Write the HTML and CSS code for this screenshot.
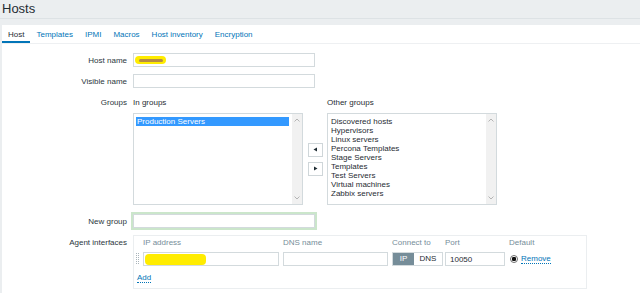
FILE: index.html
```html
<!DOCTYPE html>
<html lang="en">
<head>
    <meta charset="UTF-8">
    <title>Hosts</title>
    <link rel="stylesheet" href="styles.css">
</head>
<body>
    <header class="page-head">
        <h1>Hosts</h1>
    </header>
    <main class="card">
        <nav class="tabs">
            <a class="tab active">Host</a>
            <a class="tab">Templates</a>
            <a class="tab">IPMI</a>
            <a class="tab">Macros</a>
            <a class="tab">Host inventory</a>
            <a class="tab">Encryption</a>
        </nav>
        <form class="form">
            <label class="lbl">Host name</label>
            <div class="input"><span class="redact redact-host"><span class="scribble"></span></span></div>

            <label class="lbl">Visible name</label>
            <div class="input"></div>

            <label class="lbl">Groups</label>
            <div class="groups">
                <div class="group-col">
                    <div class="col-title">In groups</div>
                    <div class="listbox">
                        <ul class="items">
                            <li class="selected">Production Servers</li>
                        </ul>
                        <div class="scroll">
                            <svg width="6" height="4" viewBox="0 0 6 4"><polyline points="0.5,3.5 3,1 5.5,3.5" fill="none" stroke="#b4b4b4" stroke-width="1"/></svg>
                            <svg width="6" height="4" viewBox="0 0 6 4"><polyline points="0.5,0.5 3,3 5.5,0.5" fill="none" stroke="#b4b4b4" stroke-width="1"/></svg>
                        </div>
                    </div>
                </div>
                <div class="move">
                    <button type="button" class="move-btn"><svg width="5" height="5" viewBox="0 0 5 5"><polygon points="4,0.5 4,4.5 0.5,2.5" fill="#1f2c33"/></svg></button>
                    <button type="button" class="move-btn"><svg width="5" height="5" viewBox="0 0 5 5"><polygon points="1,0.5 1,4.5 4.5,2.5" fill="#1f2c33"/></svg></button>
                </div>
                <div class="group-col">
                    <div class="col-title">Other groups</div>
                    <div class="listbox">
                        <ul class="items">
                            <li>Discovered hosts</li>
                            <li>Hypervisors</li>
                            <li>Linux servers</li>
                            <li>Percona Templates</li>
                            <li>Stage Servers</li>
                            <li>Templates</li>
                            <li>Test Servers</li>
                            <li>Virtual machines</li>
                            <li>Zabbix servers</li>
                        </ul>
                        <div class="scroll">
                            <svg width="6" height="4" viewBox="0 0 6 4"><polyline points="0.5,3.5 3,1 5.5,3.5" fill="none" stroke="#b4b4b4" stroke-width="1"/></svg>
                            <svg width="6" height="4" viewBox="0 0 6 4"><polyline points="0.5,0.5 3,3 5.5,0.5" fill="none" stroke="#b4b4b4" stroke-width="1"/></svg>
                        </div>
                    </div>
                </div>
            </div>

            <label class="lbl lbl-new">New group</label>
            <div class="input focused"></div>

            <label class="lbl">Agent interfaces</label>
            <div class="ifaces">
                <span></span>
                <span class="th">IP address</span>
                <span class="th">DNS name</span>
                <span class="th">Connect to</span>
                <span class="th">Port</span>
                <span class="th">Default</span>

                <span class="handle">
                    <svg width="3" height="12" viewBox="0 0 3 12">
                        <g fill="#a9b4ba">
                            <rect x="0" y="0" width="1" height="1"/><rect x="2" y="0" width="1" height="1"/>
                            <rect x="0" y="2" width="1" height="1"/><rect x="2" y="2" width="1" height="1"/>
                            <rect x="0" y="4" width="1" height="1"/><rect x="2" y="4" width="1" height="1"/>
                            <rect x="0" y="6" width="1" height="1"/><rect x="2" y="6" width="1" height="1"/>
                            <rect x="0" y="8" width="1" height="1"/><rect x="2" y="8" width="1" height="1"/>
                            <rect x="0" y="10" width="1" height="1"/><rect x="2" y="10" width="1" height="1"/>
                        </g>
                    </svg>
                </span>
                <div class="input cell"><span class="redact redact-ip"></span></div>
                <div class="input cell"></div>
                <div class="toggle"><span class="on">IP</span><span>DNS</span></div>
                <div class="input cell value">10050</div>
                <div class="default">
                    <span class="radio"></span>
                    <a class="link">Remove</a>
                </div>

                <a class="link add">Add</a>
            </div>
        </form>
    </main>
</body>
</html>
```

FILE: styles.css
```css
* {
    margin: 0;
    padding: 0;
    box-sizing: border-box;
}
body {
    background-color: #ebeef0;
    font-family: "Liberation Sans", Arial, sans-serif;
    font-size: 8px;
    color: #1f2c33;
    height: 293px;
    overflow: hidden;
}
.page-head {
    height: 19px;
    border-bottom: 1px solid #dde2e5;
    padding-left: 2px;
}
.page-head h1 {
    font-size: 13px;
    font-weight: normal;
    line-height: 18px;
    color: #1f2c33;
}
.card {
    margin: 6px 0 0 2px;
    background: #fff;
    height: 268px;
}
.tabs {
    display: flex;
    height: 19px;
    border-bottom: 1px solid #eef0f2;
}
.tab {
    padding: 0 6px;
    line-height: 19px;
    color: #0275b8;
}
.tab.active {
    color: #1f2c33;
    box-shadow: inset 0 -2px 0 #0275b8;
}
.form {
    display: grid;
    grid-template-columns: 125px auto;
    column-gap: 6px;
    row-gap: 7px;
    padding-top: 9px;
    align-items: start;
}
.lbl {
    text-align: right;
    line-height: 13px;
    height: 14px;
    padding-top: 1px;
    color: #2b363c;
}
.lbl-new {
    margin-top: 2px;
}
.input {
    width: 182px;
    height: 14px;
    border: 1px solid #d3dadd;
    background: #fff;
    display: flex;
    align-items: center;
    padding-left: 1px;
}
.input.focused {
    margin-top: 2px;
    box-shadow: 0 0 0 2px #cbe6cb;
}
.redact {
    display: block;
    background: #ffec00;
    border-radius: 4px;
    filter: blur(0.4px);
}
.redact-host {
    width: 31px;
    height: 8px;
    display: flex;
    align-items: center;
    justify-content: center;
}
.scribble {
    width: 24px;
    height: 3px;
    border-radius: 2px;
    background: #b58a45;
}
.redact-ip {
    width: 61px;
    height: 11px;
}
.groups {
    display: flex;
}
.group-col {
    width: 170px;
}
.col-title {
    line-height: 13px;
    padding-top: 1px;
    margin-bottom: 4px;
}
.listbox {
    height: 92px;
    border: 1px solid #d3dadd;
    display: flex;
}
.items {
    list-style: none;
    flex: 1;
    padding: 3px 3px 0 2px;
}
.items li {
    line-height: 9px;
    height: 9px;
    padding-left: 1px;
    white-space: nowrap;
}
.items li.selected {
    background: #3399ff;
    color: #fff;
}
.scroll {
    width: 10px;
    background: #f1f1f1;
    display: flex;
    flex-direction: column;
    justify-content: space-between;
    align-items: center;
    padding: 4px 0;
}
.scroll svg {
    display: block;
}
.move {
    width: 24px;
    display: flex;
    flex-direction: column;
    align-items: center;
    justify-content: center;
    gap: 5px;
    padding-top: 18px;
}
.move-btn {
    width: 15px;
    height: 14px;
    border: 1px solid #cfd6d9;
    background: #fff;
    display: flex;
    align-items: center;
    justify-content: center;
}
.move-btn svg {
    display: block;
}
.ifaces {
    width: 454px;
    height: 54px;
    border: 1px solid #ebeef0;
    display: grid;
    grid-template-columns: 5px 136px 105px 49px 60px auto;
    grid-template-rows: 12px 14px 12px;
    column-gap: 4px;
    row-gap: 3px;
    padding-top: 1px;
    align-items: center;
}
.th {
    color: #768d99;
    line-height: 12px;
}
.handle {
    justify-self: end;
    display: flex;
}
.input.cell {
    width: auto;
}
.input.value {
    padding-left: 4px;
}
.toggle {
    display: flex;
    height: 14px;
    width: 51px;
    border: 1px solid #d3dadd;
}
.toggle span {
    flex: 1;
    text-align: center;
    line-height: 12px;
}
.toggle .on {
    flex: 0 0 21px;
    background: #768d99;
    color: #fff;
}
.default {
    display: flex;
    align-items: center;
    gap: 3px;
    padding-left: 1px;
}
.radio {
    width: 8px;
    height: 8px;
    border-radius: 50%;
    border: 1px solid #6e6e6e;
    background: radial-gradient(circle, #111 2px, #fff 2.4px);
}
.link {
    color: #0275b8;
    border-bottom: 1px dotted #0275b8;
    line-height: 9px;
}
.add {
    justify-self: start;
    grid-column: 1 / span 2;
    margin: 5px 0 0 3px;
}
```
